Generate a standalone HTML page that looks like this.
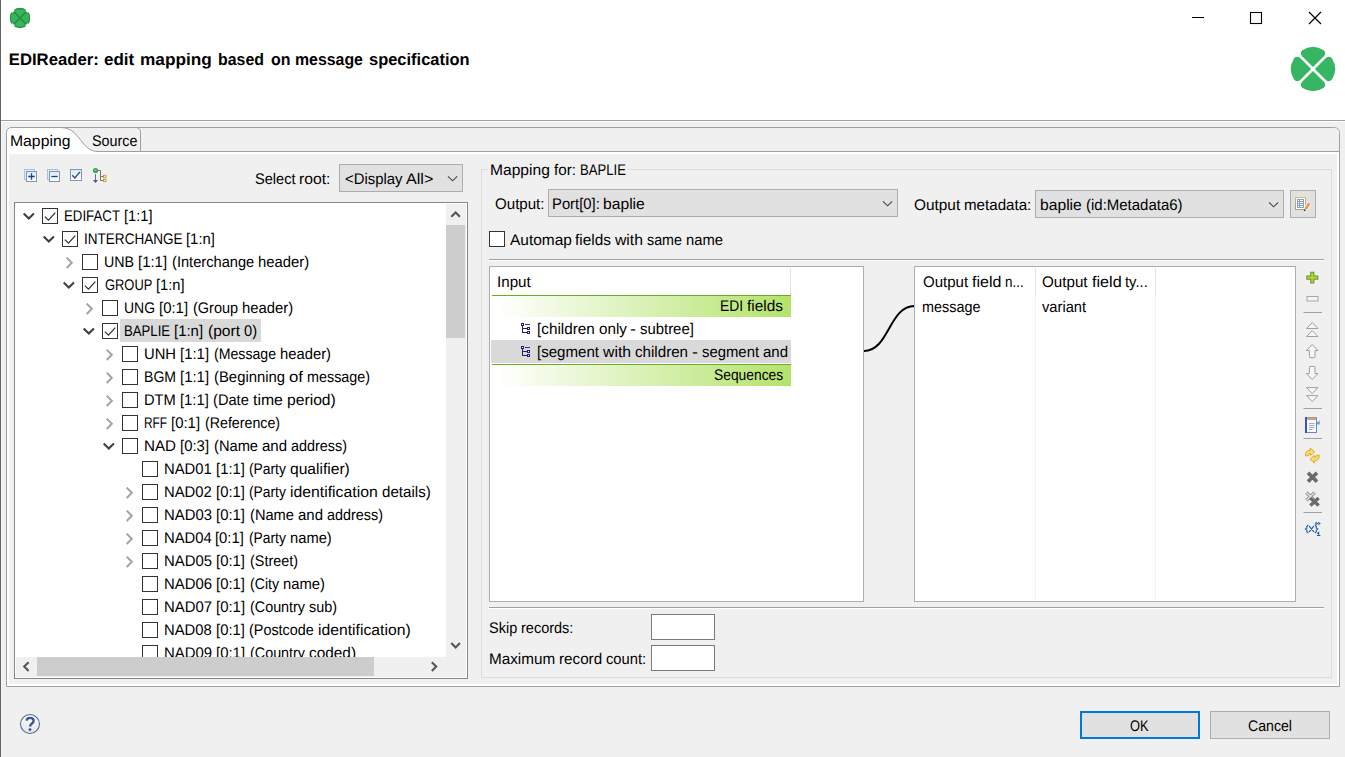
<!DOCTYPE html>
<html>
<head>
<meta charset="utf-8">
<title>EDIReader: edit mapping based on message specification</title>
<style>
html,body{margin:0;padding:0}
body{width:1345px;height:757px;position:relative;overflow:hidden;background:#f0f0f0;
  font-family:"Liberation Sans",sans-serif;font-size:15.4px;color:#000;text-rendering:geometricPrecision}
.a{position:absolute;display:block}
.t{position:absolute;white-space:nowrap;line-height:20px;height:20px;transform-origin:0 0;color:#000}
.b{font-weight:bold;font-size:16.7px}
.cb{position:absolute;width:14px;height:14px;border:1px solid #333;background:#fff}
.combo{position:absolute;background:#e1e1e1;border:1px solid #adadad;box-sizing:border-box}
.hl{position:absolute;height:1px;background:#a0a0a0}
.inp{position:absolute;background:#fff;border:1px solid #7a7a7a;box-sizing:border-box}
.box{position:absolute;background:#fff;border:1px solid #abadb3;box-sizing:border-box}
</style>
</head>
<body>
<!-- title area -->
<div class="a" style="left:0;top:0;width:1345px;height:120px;background:#fff"></div>
<div class="hl" style="left:0;top:120px;width:1345px;background:#a0a0a0"></div>
<div class="hl" style="left:0;top:121px;width:1345px;background:#fff"></div>

<!-- tab folder frame -->
<svg class="a" style="left:0;top:0" width="1345" height="757" viewBox="0 0 1345 757">
  <!-- folder body white -->
  <path d="M6.5 686.5 L6.5 133 Q6.5 127.5 12 127.5 L1333.5 127.5 Q1339.5 127.5 1339.5 133.5 L1339.5 686.5 Z" fill="#fff" stroke="#a0a0a0" stroke-width="1"/>
  <!-- unselected header area -->
  <path d="M61 128 C 73 128, 77 136, 83 143 C 88 149, 92 151, 98 151 L1339 151 L1339 133.5 Q1339 128 1333.5 128 Z" fill="#f0f0f0"/>
  <!-- selected tab curve + header bottom line -->
  <path d="M60 127.5 C 73 127.5, 77 136, 83 143 C 88 149, 92 151.5, 98 151.5 L1339.5 151.5" fill="none" stroke="#a0a0a0" stroke-width="1"/>
  <!-- source tab right edge -->
  <path d="M140.5 151.5 L140.5 132.5 Q140.5 127.5 135.5 127.5" fill="none" stroke="#a0a0a0" stroke-width="1"/>
  <!-- content -->
  <rect x="9" y="154" width="1328" height="530" fill="#f0f0f0"/>
</svg>

<!-- left window edge -->
<div class="a" style="left:0;top:0;width:1px;height:757px;background:#636363"></div>
<div class="a" style="left:1px;top:122px;width:1px;height:635px;background:#f7f7f7"></div>

<!-- window controls -->
<svg class="a" style="left:1180px;top:0" width="165" height="36" viewBox="1180 0 165 36">
  <path d="M1192 17.5 H1204" stroke="#000" stroke-width="1" fill="none"/>
  <rect x="1250.5" y="12.5" width="11" height="11" stroke="#000" stroke-width="1.1" fill="none"/>
  <path d="M1309 12 L1321 24 M1321 12 L1309 24" stroke="#000" stroke-width="1.2" fill="none"/>
</svg>

<!-- small app icon -->
<svg class="a" style="left:8px;top:6px" width="24" height="24" viewBox="0 0 24 24">
  <circle cx="12" cy="12" r="10.1" fill="#3bb25d"/>
  <circle cx="12" cy="12" r="9.5" fill="none" stroke="#23983f" stroke-width="1.3"/>
  <path d="M5.6 5.6 L18.4 18.4 M18.4 5.6 L5.6 18.4" stroke="#219641" stroke-width="1.8"/>
  <g fill="#fff">
    <path d="M3.6 3.6 L6.9 4.3 L4.3 6.9 Z"/><path d="M20.4 3.6 L17.1 4.3 L19.7 6.9 Z"/>
    <path d="M3.6 20.4 L6.9 19.7 L4.3 17.1 Z"/><path d="M20.4 20.4 L17.1 19.7 L19.7 17.1 Z"/>
  </g>
</svg>

<!-- big logo -->
<svg class="a" style="left:1288px;top:44px" width="50" height="50" viewBox="-25 -25 50 50">
  <g fill="#36b662">
    <path d="M0 -1.9 L-10.9 -12.8 Q-13.6 -16 -10.8 -18.8 Q-5.5 -22.3 0 -22.3 Q5.5 -22.3 10.8 -18.8 Q13.6 -16 10.9 -12.8 Z" transform="rotate(0)"/>
    <path d="M0 -1.9 L-10.9 -12.8 Q-13.6 -16 -10.8 -18.8 Q-5.5 -22.3 0 -22.3 Q5.5 -22.3 10.8 -18.8 Q13.6 -16 10.9 -12.8 Z" transform="rotate(90)"/>
    <path d="M0 -1.9 L-10.9 -12.8 Q-13.6 -16 -10.8 -18.8 Q-5.5 -22.3 0 -22.3 Q5.5 -22.3 10.8 -18.8 Q13.6 -16 10.9 -12.8 Z" transform="rotate(180)"/>
    <path d="M0 -1.9 L-10.9 -12.8 Q-13.6 -16 -10.8 -18.8 Q-5.5 -22.3 0 -22.3 Q5.5 -22.3 10.8 -18.8 Q13.6 -16 10.9 -12.8 Z" transform="rotate(270)"/>
  </g>
</svg>

<!-- ============ left pane ============ -->
<!-- toolbar icons -->
<svg class="a" style="left:20px;top:164px" width="92" height="24" viewBox="20 164 92 24">
  <defs>
    <linearGradient id="sq" x1="0" y1="0" x2="0" y2="1"><stop offset="0" stop-color="#d3ecfb"/><stop offset="1" stop-color="#ffffff"/></linearGradient>
  </defs>
  <!-- expand all -->
  <rect x="24.5" y="169.5" width="10" height="10" fill="#dbeaf7" stroke="#b4c0d6"/>
  <rect x="26.5" y="171.5" width="10" height="10" fill="url(#sq)" stroke="#8994b0"/>
  <path d="M28.3 176.5 H34.7 M31.5 173.3 V179.7" stroke="#17487a" stroke-width="1.3" fill="none"/>
  <!-- collapse all -->
  <rect x="47.5" y="169.5" width="10" height="10" fill="#dbeaf7" stroke="#b4c0d6"/>
  <rect x="49.5" y="171.5" width="10" height="10" fill="url(#sq)" stroke="#8994b0"/>
  <path d="M51.3 176.5 H57.7" stroke="#17487a" stroke-width="1.3" fill="none"/>
  <!-- check -->
  <rect x="70.5" y="169.5" width="11" height="11" fill="url(#sq)" stroke="#8994b0"/>
  <path d="M72.3 175.2 L74.8 177.9 L80 171.9" stroke="#34497a" stroke-width="1.4" fill="none"/>
  <!-- tree arrow -->
  <path d="M97 170.5 H100.5 V180.5 H103.5 M100.5 176.5 H103.5" stroke="#6a758c" stroke-width="1" fill="none"/>
  <circle cx="95.5" cy="170.5" r="2.6" fill="#3f9f57"/>
  <circle cx="95.3" cy="170.3" r="1.1" fill="#72c487"/>
  <path d="M95.5 174 V181.5" stroke="#5872a8" stroke-width="1" fill="none"/>
  <path d="M93 180 L95.5 183 L98 180 Z" fill="#4e5a70"/>
  <rect x="103.5" y="175.3" width="2.4" height="2.4" fill="#fff3c4" stroke="#c8981e" stroke-width="0.9"/>
  <rect x="103.5" y="179.3" width="2.4" height="2.4" fill="#fff3c4" stroke="#c8981e" stroke-width="0.9"/>
</svg>

<!-- select root combo -->
<div class="combo" style="left:339px;top:164px;width:124px;height:28px"></div>
<svg class="a" style="left:446px;top:172px" width="14" height="12" viewBox="446 172 14 12"><path d="M448 176.3 L452.6 180.8 L457.2 176.3" fill="none" stroke="#444" stroke-width="1.1"/></svg>

<!-- tree -->
<div class="a" style="left:14px;top:202px;width:454px;height:477px;box-sizing:border-box;border:1px solid #828790;background:#fff"></div>
<div class="a" id="treeclip" style="left:15px;top:203px;width:431px;height:454px;overflow:hidden">
 <div class="a" style="left:-15px;top:-203px;width:1345px;height:757px">
  <div class="a" style="left:120px;top:319px;width:141px;height:23px;background:#d9d9d9"></div>
<svg class="a" style="left:21.5px;top:211.0px" width="14" height="10" viewBox="0 0 14 10"><path d="M1.7 2.6 L6.8 7.6 L11.9 2.6" fill="none" stroke="#404040" stroke-width="2.1"/></svg>
<div class="cb" style="left:42px;top:208px"><svg width="14" height="14" viewBox="0 0 14 14" style="display:block"><path d="M1.8 7.6 L5.5 11.2 L12.3 3.6" fill="none" stroke="#333" stroke-width="1.25"/></svg></div>
<svg class="a" style="left:41.5px;top:234.0px" width="14" height="10" viewBox="0 0 14 10"><path d="M1.7 2.6 L6.8 7.6 L11.9 2.6" fill="none" stroke="#404040" stroke-width="2.1"/></svg>
<div class="cb" style="left:62px;top:231px"><svg width="14" height="14" viewBox="0 0 14 14" style="display:block"><path d="M1.8 7.6 L5.5 11.2 L12.3 3.6" fill="none" stroke="#333" stroke-width="1.25"/></svg></div>
<svg class="a" style="left:64.5px;top:256.0px" width="10" height="14" viewBox="0 0 10 14"><path d="M1.7 1.6 L6.8 6.8 L1.7 12" fill="none" stroke="#a3a3a3" stroke-width="2"/></svg>
<div class="cb" style="left:82px;top:254px"></div>
<svg class="a" style="left:61.5px;top:280.0px" width="14" height="10" viewBox="0 0 14 10"><path d="M1.7 2.6 L6.8 7.6 L11.9 2.6" fill="none" stroke="#404040" stroke-width="2.1"/></svg>
<div class="cb" style="left:82px;top:277px"><svg width="14" height="14" viewBox="0 0 14 14" style="display:block"><path d="M1.8 7.6 L5.5 11.2 L12.3 3.6" fill="none" stroke="#333" stroke-width="1.25"/></svg></div>
<svg class="a" style="left:84.5px;top:302.0px" width="10" height="14" viewBox="0 0 10 14"><path d="M1.7 1.6 L6.8 6.8 L1.7 12" fill="none" stroke="#a3a3a3" stroke-width="2"/></svg>
<div class="cb" style="left:102px;top:300px"></div>
<svg class="a" style="left:81.5px;top:326.0px" width="14" height="10" viewBox="0 0 14 10"><path d="M1.7 2.6 L6.8 7.6 L11.9 2.6" fill="none" stroke="#404040" stroke-width="2.1"/></svg>
<div class="cb" style="left:102px;top:323px"><svg width="14" height="14" viewBox="0 0 14 14" style="display:block"><path d="M1.8 7.6 L5.5 11.2 L12.3 3.6" fill="none" stroke="#333" stroke-width="1.25"/></svg></div>
<svg class="a" style="left:104.5px;top:348.0px" width="10" height="14" viewBox="0 0 10 14"><path d="M1.7 1.6 L6.8 6.8 L1.7 12" fill="none" stroke="#a3a3a3" stroke-width="2"/></svg>
<div class="cb" style="left:122px;top:346px"></div>
<svg class="a" style="left:104.5px;top:371.0px" width="10" height="14" viewBox="0 0 10 14"><path d="M1.7 1.6 L6.8 6.8 L1.7 12" fill="none" stroke="#a3a3a3" stroke-width="2"/></svg>
<div class="cb" style="left:122px;top:369px"></div>
<svg class="a" style="left:104.5px;top:394.0px" width="10" height="14" viewBox="0 0 10 14"><path d="M1.7 1.6 L6.8 6.8 L1.7 12" fill="none" stroke="#a3a3a3" stroke-width="2"/></svg>
<div class="cb" style="left:122px;top:392px"></div>
<svg class="a" style="left:104.5px;top:417.0px" width="10" height="14" viewBox="0 0 10 14"><path d="M1.7 1.6 L6.8 6.8 L1.7 12" fill="none" stroke="#a3a3a3" stroke-width="2"/></svg>
<div class="cb" style="left:122px;top:415px"></div>
<svg class="a" style="left:101.5px;top:441.0px" width="14" height="10" viewBox="0 0 14 10"><path d="M1.7 2.6 L6.8 7.6 L11.9 2.6" fill="none" stroke="#404040" stroke-width="2.1"/></svg>
<div class="cb" style="left:122px;top:438px"></div>
<div class="cb" style="left:142px;top:461px"></div>
<svg class="a" style="left:124.5px;top:486.0px" width="10" height="14" viewBox="0 0 10 14"><path d="M1.7 1.6 L6.8 6.8 L1.7 12" fill="none" stroke="#a3a3a3" stroke-width="2"/></svg>
<div class="cb" style="left:142px;top:484px"></div>
<svg class="a" style="left:124.5px;top:509.0px" width="10" height="14" viewBox="0 0 10 14"><path d="M1.7 1.6 L6.8 6.8 L1.7 12" fill="none" stroke="#a3a3a3" stroke-width="2"/></svg>
<div class="cb" style="left:142px;top:507px"></div>
<svg class="a" style="left:124.5px;top:532.0px" width="10" height="14" viewBox="0 0 10 14"><path d="M1.7 1.6 L6.8 6.8 L1.7 12" fill="none" stroke="#a3a3a3" stroke-width="2"/></svg>
<div class="cb" style="left:142px;top:530px"></div>
<svg class="a" style="left:124.5px;top:555.0px" width="10" height="14" viewBox="0 0 10 14"><path d="M1.7 1.6 L6.8 6.8 L1.7 12" fill="none" stroke="#a3a3a3" stroke-width="2"/></svg>
<div class="cb" style="left:142px;top:553px"></div>
<div class="cb" style="left:142px;top:576px"></div>
<div class="cb" style="left:142px;top:599px"></div>
<div class="cb" style="left:142px;top:622px"></div>
<div class="cb" style="left:142px;top:645px"></div>
<span class="t" style="left:63.84px;top:206.66px;transform:scaleX(0.8617)">EDIFACT</span>
<span class="t" style="left:123.77px;top:206.66px;transform:scaleX(0.9514)">[1:1]</span>
<span class="t" style="left:83.82px;top:229.66px;transform:scaleX(0.8801)">INTERCHANGE</span>
<span class="t" style="left:186.39px;top:229.66px;transform:scaleX(0.9643)">[1:n]</span>
<span class="t" style="left:103.77px;top:252.66px;transform:scaleX(0.9259)">UNB</span>
<span class="t" style="left:137.87px;top:252.66px;transform:scaleX(0.9712)">[1:1]</span>
<span class="t" style="left:171.97px;top:252.66px;transform:scaleX(0.9517)">(Interchange</span>
<span class="t" style="left:258.22px;top:252.66px;transform:scaleX(0.9642)">header)</span>
<span class="t" style="left:104.70px;top:275.66px;transform:scaleX(0.8380)">GROUP</span>
<span class="t" style="left:155.94px;top:275.66px;transform:scaleX(0.9542)">[1:n]</span>
<span class="t" style="left:123.79px;top:298.66px;transform:scaleX(0.9082)">UNG</span>
<span class="t" style="left:158.86px;top:298.66px;transform:scaleX(0.9703)">[0:1]</span>
<span class="t" style="left:192.92px;top:298.66px;transform:scaleX(0.9413)">(Group</span>
<span class="t" style="left:242.02px;top:298.66px;transform:scaleX(0.9633)">header)</span>
<span class="t" style="left:123.84px;top:321.66px;transform:scaleX(0.8552)">BAPLIE</span>
<span class="t" style="left:173.95px;top:321.66px;transform:scaleX(0.9704)">[1:n]</span>
<span class="t" style="left:208.02px;top:321.66px;transform:scaleX(1.0133)">(port</span>
<span class="t" style="left:244.09px;top:321.66px;transform:scaleX(0.9519)">0)</span>
<span class="t" style="left:143.74px;top:344.66px;transform:scaleX(0.9604)">UNH</span>
<span class="t" style="left:179.76px;top:344.66px;transform:scaleX(0.9691)">[1:1]</span>
<span class="t" style="left:213.79px;top:344.66px;transform:scaleX(0.9181)">(Message</span>
<span class="t" style="left:279.83px;top:344.66px;transform:scaleX(0.9621)">header)</span>
<span class="t" style="left:143.79px;top:367.66px;transform:scaleX(0.9141)">BGM</span>
<span class="t" style="left:179.84px;top:367.66px;transform:scaleX(0.9698)">[1:1]</span>
<span class="t" style="left:213.89px;top:367.66px;transform:scaleX(0.9663)">(Beginning</span>
<span class="t" style="left:289.00px;top:367.66px;transform:scaleX(1.0923)">of</span>
<span class="t" style="left:307.02px;top:367.66px;transform:scaleX(0.9337)">message)</span>
<span class="t" style="left:143.74px;top:390.66px;transform:scaleX(0.9556)">DTM</span>
<span class="t" style="left:179.58px;top:390.66px;transform:scaleX(0.9640)">[1:1]</span>
<span class="t" style="left:213.43px;top:390.66px;transform:scaleX(0.9523)">(Date</span>
<span class="t" style="left:253.25px;top:390.66px;transform:scaleX(1.0272)">time</span>
<span class="t" style="left:287.10px;top:390.66px;transform:scaleX(1.0182)">period)</span>
<span class="t" style="left:143.93px;top:413.66px;transform:scaleX(0.7698)">RFF</span>
<span class="t" style="left:170.97px;top:413.66px;transform:scaleX(0.9697)">[0:1]</span>
<span class="t" style="left:205.01px;top:413.66px;transform:scaleX(0.9242)">(Reference)</span>
<span class="t" style="left:143.71px;top:436.66px;transform:scaleX(0.9855)">NAD</span>
<span class="t" style="left:179.74px;top:436.66px;transform:scaleX(0.9691)">[0:3]</span>
<span class="t" style="left:213.77px;top:436.66px;transform:scaleX(0.9535)">(Name</span>
<span class="t" style="left:261.80px;top:436.66px;transform:scaleX(0.9743)">and</span>
<span class="t" style="left:290.83px;top:436.66px;transform:scaleX(0.9359)">address)</span>
<span class="t" style="left:163.74px;top:459.66px;transform:scaleX(0.9643)">NAD01</span>
<span class="t" style="left:215.57px;top:459.66px;transform:scaleX(0.9652)">[1:1]</span>
<span class="t" style="left:249.46px;top:459.66px;transform:scaleX(0.8985)">(Party</span>
<span class="t" style="left:290.32px;top:459.66px;transform:scaleX(1.0133)">qualifier)</span>
<span class="t" style="left:163.74px;top:482.66px;transform:scaleX(0.9644)">NAD02</span>
<span class="t" style="left:215.57px;top:482.66px;transform:scaleX(0.9653)">[0:1]</span>
<span class="t" style="left:249.46px;top:482.66px;transform:scaleX(0.8985)">(Party</span>
<span class="t" style="left:290.33px;top:482.66px;transform:scaleX(1.0252)">identification</span>
<span class="t" style="left:382.03px;top:482.66px;transform:scaleX(0.9845)">details)</span>
<span class="t" style="left:163.73px;top:505.66px;transform:scaleX(0.9670)">NAD03</span>
<span class="t" style="left:215.71px;top:505.66px;transform:scaleX(0.9679)">[0:1]</span>
<span class="t" style="left:249.69px;top:505.66px;transform:scaleX(0.9523)">(Name</span>
<span class="t" style="left:297.66px;top:505.66px;transform:scaleX(0.9731)">and</span>
<span class="t" style="left:326.65px;top:505.66px;transform:scaleX(0.9347)">address)</span>
<span class="t" style="left:163.74px;top:528.66px;transform:scaleX(0.9625)">NAD04</span>
<span class="t" style="left:215.47px;top:528.66px;transform:scaleX(0.9634)">[0:1]</span>
<span class="t" style="left:249.30px;top:528.66px;transform:scaleX(0.8968)">(Party</span>
<span class="t" style="left:290.09px;top:528.66px;transform:scaleX(0.9578)">name)</span>
<span class="t" style="left:163.73px;top:551.66px;transform:scaleX(0.9667)">NAD05</span>
<span class="t" style="left:215.69px;top:551.66px;transform:scaleX(0.9676)">[0:1]</span>
<span class="t" style="left:249.66px;top:551.66px;transform:scaleX(0.9347)">(Street)</span>
<span class="t" style="left:163.73px;top:574.66px;transform:scaleX(0.9668)">NAD06</span>
<span class="t" style="left:215.70px;top:574.66px;transform:scaleX(0.9677)">[0:1]</span>
<span class="t" style="left:249.67px;top:574.66px;transform:scaleX(0.9162)">(City</span>
<span class="t" style="left:282.65px;top:574.66px;transform:scaleX(0.9621)">name)</span>
<span class="t" style="left:163.73px;top:597.66px;transform:scaleX(0.9682)">NAD07</span>
<span class="t" style="left:215.77px;top:597.66px;transform:scaleX(0.9691)">[0:1]</span>
<span class="t" style="left:249.80px;top:597.66px;transform:scaleX(0.9327)">(Country</span>
<span class="t" style="left:308.85px;top:597.66px;transform:scaleX(0.9359)">sub)</span>
<span class="t" style="left:163.74px;top:620.66px;transform:scaleX(0.9641)">NAD08</span>
<span class="t" style="left:215.56px;top:620.66px;transform:scaleX(0.9650)">[0:1]</span>
<span class="t" style="left:249.44px;top:620.66px;transform:scaleX(0.9348)">(Postcode</span>
<span class="t" style="left:318.20px;top:620.66px;transform:scaleX(1.0220)">identification)</span>
<span class="t" style="left:163.73px;top:643.66px;transform:scaleX(0.9682)">NAD09</span>
<span class="t" style="left:215.77px;top:643.66px;transform:scaleX(0.9691)">[0:1]</span>
<span class="t" style="left:249.80px;top:643.66px;transform:scaleX(0.9327)">(Country</span>
<span class="t" style="left:308.84px;top:643.66px;transform:scaleX(0.9995)">coded)</span>
 </div>
</div>
<!-- vertical scrollbar -->
<div class="a" style="left:446px;top:204px;width:20px;height:473px;background:#f0f0f0"></div>
<div class="a" style="left:446px;top:225px;width:19px;height:113px;background:#cdcdcd"></div>
<svg class="a" style="left:449px;top:208px" width="14" height="12" viewBox="449 208 14 12"><path d="M451.3 216.8 L455.6 212.4 L459.9 216.8" fill="none" stroke="#555" stroke-width="2.1"/></svg>
<svg class="a" style="left:449px;top:639px" width="14" height="12" viewBox="449 639 14 12"><path d="M451.3 643 L455.6 647.4 L459.9 643" fill="none" stroke="#555" stroke-width="2.1"/></svg>
<!-- horizontal scrollbar -->
<div class="a" style="left:16px;top:657px;width:430px;height:20px;background:#f0f0f0"></div>
<div class="a" style="left:37px;top:657px;width:337px;height:19px;background:#cdcdcd"></div>
<svg class="a" style="left:19px;top:660px" width="14" height="14" viewBox="19 660 14 14"><path d="M28.6 662.3 L24.2 666.6 L28.6 670.9" fill="none" stroke="#555" stroke-width="2.1"/></svg>
<svg class="a" style="left:427px;top:660px" width="14" height="14" viewBox="427 660 14 14"><path d="M431.8 662.3 L436.2 666.6 L431.8 670.9" fill="none" stroke="#555" stroke-width="2.1"/></svg>

<!-- ============ right pane ============ -->
<!-- group box -->
<div class="a" style="left:481px;top:169px;width:851px;height:509px;box-sizing:border-box;border:1px solid #dcdcdc"></div>
<div class="a" style="left:488px;top:162px;width:140px;height:16px;background:#f0f0f0"></div>

<div class="combo" style="left:548px;top:189px;width:350px;height:28px"></div>
<svg class="a" style="left:881px;top:197px" width="14" height="12" viewBox="881 197 14 12"><path d="M883 201.3 L887.6 205.8 L892.2 201.3" fill="none" stroke="#444" stroke-width="1.1"/></svg>
<div class="combo" style="left:1035px;top:190px;width:249px;height:28px"></div>
<svg class="a" style="left:1267px;top:198px" width="14" height="12" viewBox="1267 198 14 12"><path d="M1269 202.3 L1273.6 206.8 L1278.2 202.3" fill="none" stroke="#444" stroke-width="1.1"/></svg>
<!-- edit metadata button -->
<div class="combo" style="left:1290px;top:190px;width:26px;height:28px"></div>
<svg class="a" style="left:1294px;top:196px" width="18" height="16" viewBox="1294 196 18 16">
  <defs><linearGradient id="fr" x1="0" y1="0" x2="0" y2="1"><stop offset="0" stop-color="#cdbd6c"/><stop offset="1" stop-color="#a09c94"/></linearGradient></defs>
  <rect x="1295.5" y="197.5" width="10" height="12" fill="#fff" stroke="url(#fr)" stroke-width="1"/>
  <rect x="1297" y="199" width="7" height="9" fill="#8b9dc9"/>
  <g fill="#fff">
    <rect x="1298" y="200" width="1" height="1"/><rect x="1300" y="200" width="3" height="1"/>
    <rect x="1298" y="202" width="1" height="1"/><rect x="1300" y="202" width="3" height="1"/>
    <rect x="1298" y="204" width="1" height="1"/><rect x="1300" y="204" width="3" height="1"/>
    <rect x="1298" y="206" width="1" height="1"/><rect x="1300" y="206" width="3" height="1"/>
  </g>
  <path d="M1309.2 203.2 L1305.2 209.6" stroke="#f4f4f4" stroke-width="4.2" fill="none"/>
  <path d="M1309.2 203.4 L1305.5 209.2" stroke="#e08a2e" stroke-width="2.4" fill="none"/>
  <path d="M1308.6 203.6 L1305.2 208.9" stroke="#f0b066" stroke-width="0.8" fill="none"/>
  <circle cx="1304.6" cy="210.3" r="0.8" fill="#111"/>
</svg>

<!-- automap checkbox -->
<div class="cb" style="left:489px;top:231px"></div>

<!-- separators -->
<div class="hl" style="left:489px;top:259px;width:835px"></div>
<div class="hl" style="left:489px;top:260px;width:835px;background:#fff"></div>
<div class="hl" style="left:489px;top:607px;width:835px"></div>
<div class="hl" style="left:489px;top:608px;width:835px;background:#fff"></div>

<!-- input table -->
<div class="box" style="left:489px;top:266px;width:375px;height:336px"></div>
<div class="a" style="left:790px;top:268px;width:1px;height:27px;background:#e5e5e5"></div>
<div class="a" style="left:492px;top:295px;width:299px;height:1px;background:#6aad22"></div>
<div class="a" style="left:492px;top:296px;width:299px;height:21px;background:linear-gradient(to right,#ffffff 0%,#ffffff 2%,#b3e36b 100%)"></div>
<div class="a" style="left:491px;top:340px;width:300px;height:23px;background:#d9d9d9"></div>
<div class="a" style="left:492px;top:364px;width:299px;height:1px;background:#6aad22"></div>
<div class="a" style="left:492px;top:365px;width:299px;height:21px;background:linear-gradient(to right,#ffffff 0%,#ffffff 2%,#b3e36b 100%)"></div>
<!-- row icons -->
<svg class="a" style="left:520px;top:322px" width="11" height="13" viewBox="520 322 11 13" shape-rendering="crispEdges">
  <rect x="521" y="323" width="3" height="3" fill="#1c1c8c"/><rect x="522" y="324" width="1" height="1" fill="#fff"/>
  <rect x="525" y="324" width="5" height="1" fill="#3c3c5c"/>
  <rect x="522" y="326" width="1" height="7" fill="#26264e"/>
  <rect x="523" y="328" width="4" height="1" fill="#26264e"/>
  <rect x="523" y="332" width="4" height="1" fill="#26264e"/>
  <rect x="527" y="327" width="3" height="3" fill="#1c1c8c"/><rect x="528" y="328" width="1" height="1" fill="#fff"/>
  <rect x="527" y="331" width="3" height="3" fill="#1c1c8c"/><rect x="528" y="332" width="1" height="1" fill="#fff"/>
</svg>
<svg class="a" style="left:520px;top:345px" width="11" height="13" viewBox="520 322 11 13" shape-rendering="crispEdges">
  <rect x="521" y="323" width="3" height="3" fill="#1c1c8c"/><rect x="522" y="324" width="1" height="1" fill="#fff"/>
  <rect x="525" y="324" width="5" height="1" fill="#3c3c5c"/>
  <rect x="522" y="326" width="1" height="7" fill="#26264e"/>
  <rect x="523" y="328" width="4" height="1" fill="#26264e"/>
  <rect x="523" y="332" width="4" height="1" fill="#26264e"/>
  <rect x="527" y="327" width="3" height="3" fill="#1c1c8c"/><rect x="528" y="328" width="1" height="1" fill="#fff"/>
  <rect x="527" y="331" width="3" height="3" fill="#1c1c8c"/><rect x="528" y="332" width="1" height="1" fill="#fff"/>
</svg>
<div class="a" style="left:491px;top:340px;width:299px;height:23px;overflow:hidden">
 <div class="a" style="left:-491px;top:-340px;width:1345px;height:757px">
<span class="t" style="left:536.77px;top:342.66px;transform:scaleX(0.9801)">[segment</span>
<span class="t" style="left:602.82px;top:342.66px;transform:scaleX(1.0238)">with</span>
<span class="t" style="left:634.84px;top:342.66px;transform:scaleX(0.9840)">children</span>
<span class="t" style="left:691.88px;top:342.66px;transform:scaleX(1.1715)">-</span>
<span class="t" style="left:701.89px;top:342.66px;transform:scaleX(0.9663)">segment</span>
<span class="t" style="left:762.93px;top:342.66px;transform:scaleX(0.9743)">and</span>
<span class="t" style="left:791.95px;top:342.66px;transform:scaleX(0.9977)">children]</span>
 </div>
</div>

<!-- connection curve -->
<svg class="a" style="left:860px;top:296px" width="60" height="66" viewBox="860 296 60 66">
  <path d="M864 351 C 889 351, 889 306, 914.5 306" fill="none" stroke="#000" stroke-width="2"/>
</svg>

<!-- output table -->
<div class="box" style="left:914px;top:266px;width:382px;height:336px"></div>
<div class="a" style="left:1035px;top:268px;width:1px;height:332px;background:#edf4fb"></div>
<div class="a" style="left:1155px;top:268px;width:1px;height:332px;background:#edf4fb"></div>
<div class="a" style="left:1035px;top:268px;width:1px;height:27px;background:#e5e5e5"></div>
<div class="a" style="left:1155px;top:268px;width:1px;height:27px;background:#e5e5e5"></div>

<!-- right toolbar -->
<svg class="a" style="left:1300px;top:266px" width="26" height="276" viewBox="1300 266 26 276">
  <!-- plus -->
  <path d="M1312.3 271.8 V283.4 M1306.3 277.6 H1318.3" stroke="#5f9a2a" stroke-width="4.2" fill="none"/>
  <path d="M1312.3 272.8 V282.4 M1307.3 277.6 H1317.3" stroke="#b4d33a" stroke-width="2.2" fill="none"/>
  <!-- minus -->
  <rect x="1307" y="296.5" width="11" height="4.5" fill="#f4f4f4" stroke="#a6a6a6" stroke-width="1"/>
  <path d="M1303.5 312.5 H1322" stroke="#a0a0a0" stroke-width="1"/>
  <!-- double up -->
  <path d="M1306.5 328.5 L1312.2 322.6 L1317.9 328.5 Z" fill="#f6f6f6" stroke="#a0a0a0" stroke-width="1"/>
  <path d="M1306.5 336.5 L1312.2 330.6 L1317.9 336.5 Z" fill="#f6f6f6" stroke="#a0a0a0" stroke-width="1"/>
  <!-- up -->
  <path d="M1312.2 344.5 L1318 350.5 L1315 350.5 L1315 357 Q1315 357.6 1314.4 357.6 L1310 357.6 Q1309.4 357.6 1309.4 357 L1309.4 350.5 L1306.4 350.5 Z" fill="#f6f6f6" stroke="#a0a0a0" stroke-width="1"/>
  <!-- down -->
  <path d="M1312.2 379.6 L1318 373.6 L1315 373.6 L1315 367 Q1315 366.4 1314.4 366.4 L1310 366.4 Q1309.4 366.4 1309.4 367 L1309.4 373.6 L1306.4 373.6 Z" fill="#f6f6f6" stroke="#a0a0a0" stroke-width="1"/>
  <!-- double down -->
  <path d="M1306.5 387.6 L1312.2 393.5 L1317.9 387.6 Z" fill="#f6f6f6" stroke="#a0a0a0" stroke-width="1"/>
  <path d="M1306.5 395.6 L1312.2 401.5 L1317.9 395.6 Z" fill="#f6f6f6" stroke="#a0a0a0" stroke-width="1"/>
  <path d="M1303.5 408.5 H1322" stroke="#a0a0a0" stroke-width="1"/>
  <!-- doc icon -->
  <rect x="1305.5" y="417.5" width="11" height="15" fill="#f4f7fb" stroke="#6a86c8" stroke-width="1"/>
  <rect x="1305" y="417" width="2" height="16" fill="#3d55ae"/>
  <rect x="1307.2" y="417.4" width="9" height="2.6" fill="#c2a67a"/>
  <path d="M1309 423.5 H1314.5 M1309 425.5 H1314.5 M1309 427.5 H1314.5 M1309 429.5 H1312.5" stroke="#9aa0aa" stroke-width="0.9"/>
  <path d="M1315.3 424.3 L1319.6 420.6 L1319.6 424.6 Z" fill="#5a96de"/>
  <path d="M1303.5 438.5 H1322" stroke="#a0a0a0" stroke-width="1"/>
  <!-- refresh (yellow arrows) -->
  <g fill="#fbdc6e" stroke="#d9a514" stroke-width="0.9" stroke-linejoin="round">
    <path d="M1305.3 455.8 Q1305.3 450.2 1310.3 450.2 L1310.3 448 L1314.6 451.8 L1310.3 455.6 L1310.3 453.4 Q1308.2 453.4 1308.2 455.8 Z"/>
    <path d="M1319.3 455.2 Q1319.3 460.8 1314.3 460.8 L1314.3 463 L1310 459.2 L1314.3 455.4 L1314.3 457.6 Q1316.4 457.6 1316.4 455.2 Z"/>
  </g>
  <!-- X -->
  <path d="M1308 472.8 L1317 481.6 M1317 472.8 L1308 481.6" stroke="#6b6b6b" stroke-width="3.6" fill="none"/>
  <!-- XX -->
  <path d="M1306.3 492.5 L1314.7 500.3 M1314.7 492.5 L1306.3 500.3" stroke="#8e8e8e" stroke-width="3.2" fill="none"/>
  <path d="M1306.3 492.5 L1314.7 500.3 M1314.7 492.5 L1306.3 500.3" stroke="#e2e4e0" stroke-width="1.4" fill="none"/>
  <path d="M1310.3 498 L1318.7 505.6 M1318.7 498 L1310.3 505.6" stroke="#6b6b6b" stroke-width="3.4" fill="none"/>
  <path d="M1303.5 512.5 H1322" stroke="#a0a0a0" stroke-width="1"/>
</svg>
<!-- {x} icon -->
<svg class="a" style="left:1303px;top:520px" width="20" height="18" viewBox="1303 520 20 18">
  <g fill="none" stroke="#1f60a4" stroke-width="1.15" stroke-linecap="round">
    <path d="M1308 525.3 L1306.9 526.2 L1306.9 528 L1305.5 529 L1306.9 530 L1306.9 531.8 L1308 532.7"/>
    <path d="M1309.4 526.4 L1313.6 531.6 M1313.6 526.4 L1309.4 531.6"/>
    <path d="M1315.2 525.3 L1316.3 526.2 L1316.3 528 L1317.7 529 L1316.3 530 L1316.3 531.8 L1315.2 532.7"/>
    <circle cx="1316.3" cy="523.5" r="1" stroke-width="0.95"/>
    <circle cx="1318.8" cy="523.5" r="1" stroke-width="0.95"/>
    <path d="M1317.4 533.4 L1318.7 532.4 L1318.7 535.3 M1317.3 535.5 H1320" stroke-width="1.05"/>
  </g>
</svg>

<!-- bottom inputs -->
<div class="inp" style="left:651px;top:614px;width:64px;height:26px"></div>
<div class="inp" style="left:651px;top:645px;width:64px;height:26px"></div>

<!-- buttons -->
<div class="a" style="left:1080px;top:711px;width:120px;height:28px;box-sizing:border-box;border:2px solid #0078d7;background:#e1e1e1"></div>
<div class="a" style="left:1210px;top:711px;width:120px;height:28px;box-sizing:border-box;border:1px solid #adadad;background:#e1e1e1"></div>

<!-- help icon -->
<svg class="a" style="left:18px;top:712px" width="24" height="24" viewBox="18 712 24 24">
  <defs><linearGradient id="hg" x1="0" y1="0" x2="0" y2="1"><stop offset="0" stop-color="#fbfbfc"/><stop offset="1" stop-color="#e3e5ea"/></linearGradient></defs>
  <circle cx="30" cy="724" r="9.5" fill="url(#hg)" stroke="#566a96" stroke-width="1.1"/>
  <path d="M26.6 720.6 Q26.8 717.9 30.1 717.9 Q33.6 717.9 33.6 720.7 Q33.6 722.4 31.7 723.7 Q30.1 724.8 30.1 726.6" fill="none" stroke="#3f5584" stroke-width="2.3"/>
  <circle cx="30" cy="729.6" r="1.45" fill="#3f5584"/>
</svg>

<span class="t b" style="left:8.80px;top:49.61px;transform:scaleX(1.0000)">EDIReader:</span>
<span class="t b" style="left:103.50px;top:49.61px;transform:scaleX(1.0196)">edit</span>
<span class="t b" style="left:140.27px;top:49.61px;transform:scaleX(1.0331)">mapping</span>
<span class="t b" style="left:218.05px;top:49.61px;transform:scaleX(0.9525)">based</span>
<span class="t b" style="left:270.60px;top:49.61px;transform:scaleX(0.9558)">on</span>
<span class="t b" style="left:294.95px;top:49.61px;transform:scaleX(0.9508)">message</span>
<span class="t b" style="left:368.60px;top:49.61px;transform:scaleX(0.9861)">specification</span>
<span class="t" style="left:10.18px;top:131.66px;transform:scaleX(1.0230)">Mapping</span>
<span class="t" style="left:91.60px;top:131.66px;transform:scaleX(0.9314)">Source</span>
<span class="t" style="left:254.90px;top:170.16px;transform:scaleX(0.9476)">Select</span>
<span class="t" style="left:299.49px;top:170.16px;transform:scaleX(1.0201)">root:</span>
<span class="t" style="left:344.75px;top:170.16px;transform:scaleX(0.9677)">&lt;Display</span>
<span class="t" style="left:406.18px;top:170.16px;transform:scaleX(1.0464)">All&gt;</span>
<span class="t" style="left:489.74px;top:160.66px;transform:scaleX(1.0144)">Mapping</span>
<span class="t" style="left:553.61px;top:160.66px;transform:scaleX(0.9875)">for:</span>
<span class="t" style="left:579.56px;top:160.66px;transform:scaleX(0.8518)">BAPLIE</span>
<span class="t" style="left:494.50px;top:194.96px;transform:scaleX(0.9807)">Output:</span>
<span class="t" style="left:551.54px;top:194.96px;transform:scaleX(0.9627)">Port[0]:</span>
<span class="t" style="left:603.28px;top:194.96px;transform:scaleX(1.0174)">baplie</span>
<span class="t" style="left:913.75px;top:195.66px;transform:scaleX(0.9999)">Output</span>
<span class="t" style="left:963.97px;top:195.66px;transform:scaleX(0.9831)">metadata:</span>
<span class="t" style="left:1039.50px;top:195.66px;transform:scaleX(1.0180)">baplie</span>
<span class="t" style="left:1086.30px;top:195.66px;transform:scaleX(0.9732)">(id:Metadata6)</span>
<span class="t" style="left:509.50px;top:230.66px;transform:scaleX(1.0055)">Automap</span>
<span class="t" style="left:575.43px;top:230.66px;transform:scaleX(1.0010)">fields</span>
<span class="t" style="left:615.39px;top:230.66px;transform:scaleX(1.0220)">with</span>
<span class="t" style="left:647.36px;top:230.66px;transform:scaleX(0.9291)">same</span>
<span class="t" style="left:686.32px;top:230.66px;transform:scaleX(0.9601)">name</span>
<span class="t" style="left:496.76px;top:272.66px;transform:scaleX(0.9866)">Input</span>
<span class="t" style="left:719.85px;top:296.96px;transform:scaleX(0.8978)">EDI</span>
<span class="t" style="left:746.89px;top:296.96px;transform:scaleX(1.0034)">fields</span>
<span class="t" style="left:536.76px;top:319.96px;transform:scaleX(0.9939)">[children</span>
<span class="t" style="left:598.56px;top:319.96px;transform:scaleX(0.9887)">only</span>
<span class="t" style="left:630.47px;top:319.96px;transform:scaleX(1.1671)">-</span>
<span class="t" style="left:640.43px;top:319.96px;transform:scaleX(0.9680)">subtree]</span>
<span class="t" style="left:713.60px;top:365.96px;transform:scaleX(0.8976)">Sequences</span>
<span class="t" style="left:922.50px;top:272.66px;transform:scaleX(0.9774)">Output</span>
<span class="t" style="left:971.58px;top:272.66px;transform:scaleX(1.0431)">field</span>
<span class="t" style="left:1004.96px;top:272.66px;transform:scaleX(0.8721)">n...</span>
<span class="t" style="left:921.56px;top:297.66px;transform:scaleX(0.9361)">message</span>
<span class="t" style="left:1042.25px;top:272.66px;transform:scaleX(0.9861)">Output</span>
<span class="t" style="left:1091.77px;top:272.66px;transform:scaleX(1.0524)">field</span>
<span class="t" style="left:1125.45px;top:272.66px;transform:scaleX(0.9630)">ty...</span>
<span class="t" style="left:1042.25px;top:297.66px;transform:scaleX(0.9538)">variant</span>
<span class="t" style="left:488.80px;top:618.66px;transform:scaleX(0.9419)">Skip</span>
<span class="t" style="left:521.03px;top:618.66px;transform:scaleX(0.9420)">records:</span>
<span class="t" style="left:488.51px;top:649.66px;transform:scaleX(0.9928)">Maximum</span>
<span class="t" style="left:558.74px;top:649.66px;transform:scaleX(0.9889)">record</span>
<span class="t" style="left:605.89px;top:649.66px;transform:scaleX(0.9572)">count:</span>
<span class="t" style="left:1130.30px;top:716.96px;transform:scaleX(0.8358)">OK</span>
<span class="t" style="left:1248.00px;top:716.96px;transform:scaleX(0.9181)">Cancel</span>
</body>
</html>
